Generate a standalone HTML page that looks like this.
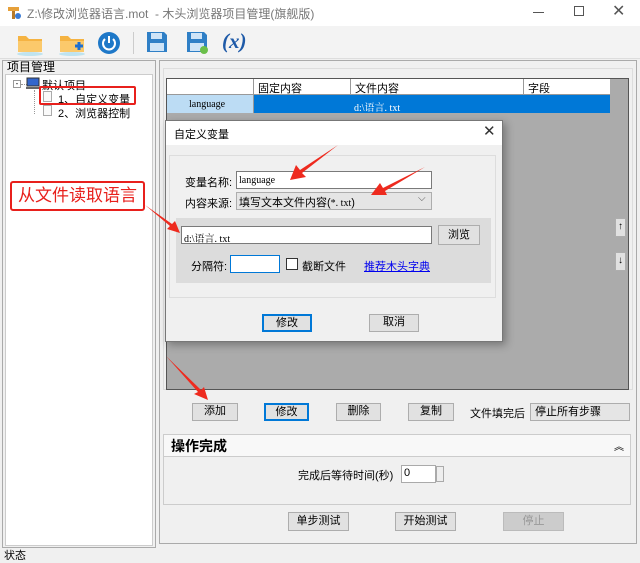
<!DOCTYPE html>
<html><head><meta charset="utf-8"><style>
*{box-sizing:border-box;margin:0;padding:0}
body{width:640px;height:560px;background:#f0f0f0;font-family:"Liberation Sans","Noto Sans CJK SC",sans-serif;font-size:11px;color:#000;position:relative;overflow:hidden}
.a{position:absolute}
.btn{position:absolute;background:#e1e1e1;border:1px solid #adadad;text-align:center;line-height:15px;font-size:11px}
.mono{font-family:"Liberation Serif","Noto Serif CJK SC",serif;font-size:10px}
</style></head><body>
<div class="a" style="left:0;top:0;width:640px;height:26px;background:#fff"></div>
<svg class="a" style="left:6px;top:4px" width="16" height="16"><rect x="2" y="3" width="11" height="4" fill="#e6a03a"/><rect x="6" y="7" width="3" height="8" fill="#b77a2a"/><circle cx="12" cy="12" r="3" fill="#3a7bd5"/></svg>
<div class="a" style="left:27px;top:5px;color:#777;font-size:12px">Z:\修改浏览器语言.mot &nbsp;- 木头浏览器项目管理(旗舰版)</div>
<div class="a" style="left:533px;top:12px;width:11px;height:1px;background:#555"></div>
<div class="a" style="left:574px;top:6px;width:10px;height:10px;border:1px solid #555"></div>
<div class="a" style="left:612px;top:1px;font-size:16px;color:#555">✕</div>
<div class="a" style="left:0;top:26px;width:640px;height:33px;background:#f3f3f3;border-bottom:1px solid #ddd"></div>
<svg class="a" style="left:16px;top:30px" width="28" height="26"><path d="M2 6h8l3 3h13v13H2z" fill="#f5b342"/><path d="M2 11h24v11H2z" fill="#fbc96b"/><ellipse cx="14" cy="24" rx="13" ry="2" fill="#bfe3ef"/></svg>
<svg class="a" style="left:58px;top:30px" width="28" height="26"><path d="M2 6h8l3 3h13v13H2z" fill="#f5b342"/><path d="M2 11h24v11H2z" fill="#fbc96b"/><path d="M17 16h8M21 12v8" stroke="#1e6fd0" stroke-width="3"/><ellipse cx="14" cy="24" rx="13" ry="2" fill="#bfe3ef"/></svg>
<svg class="a" style="left:96px;top:30px" width="26" height="26"><circle cx="13" cy="13" r="11" fill="#1e78c8"/><path d="M9 9a6 6 0 1 0 8 0" stroke="#fff" stroke-width="2" fill="none"/><path d="M13 6v7" stroke="#fff" stroke-width="2"/></svg>
<div class="a" style="left:133px;top:32px;width:1px;height:22px;background:#ccc"></div>
<svg class="a" style="left:146px;top:31px" width="22" height="22"><path d="M1 1h17l3 3v17H1z" fill="#2f7fc6"/><rect x="5" y="2" width="11" height="6" fill="#cfe4f7"/><rect x="4" y="12" width="14" height="8" fill="#cfe4f7"/></svg>
<svg class="a" style="left:186px;top:31px" width="24" height="24"><path d="M1 1h17l3 3v17H1z" fill="#2f7fc6"/><rect x="5" y="2" width="11" height="6" fill="#cfe4f7"/><rect x="4" y="12" width="14" height="8" fill="#cfe4f7"/><circle cx="18" cy="19" r="4" fill="#6bbf4a"/></svg>
<div class="a" style="left:222px;top:29px;font-family:'Liberation Serif',serif;font-weight:bold;font-style:italic;font-size:21px;color:#1e5aa8">(x)</div>
<div class="a" style="left:2px;top:60px;width:154px;height:488px;border:1px solid #aaa;background:#f0f0f0"></div>
<div class="a" style="left:7px;top:58px;font-size:12px">项目管理</div>
<div class="a" style="left:5px;top:74px;width:148px;height:472px;background:#fff;border:1px solid #ccc"></div>
<div class="a" style="left:13px;top:80px;width:8px;height:8px;border:1px solid #999;font-size:8px;line-height:5px;text-align:center">-</div>
<div class="a" style="left:21px;top:84px;width:6px;border-top:1px dotted #999"></div>
<svg class="a" style="left:26px;top:77px" width="14" height="13"><rect x="1" y="1" width="12" height="8" fill="#3366cc" stroke="#333"/><rect x="0" y="10" width="14" height="2" fill="#666"/></svg>
<div class="a" style="left:42px;top:77px">默认项目</div>
<div class="a" style="left:34px;top:90px;height:24px;border-left:1px dotted #999"></div>
<div class="a" style="left:43px;top:91px;width:9px;height:11px;border:1px solid #aaa;background:#fafafa"></div>
<div class="a" style="left:58px;top:91px">1、自定义变量</div>
<div class="a" style="left:43px;top:105px;width:9px;height:11px;border:1px solid #aaa;background:#fafafa"></div>
<div class="a" style="left:58px;top:105px">2、浏览器控制</div>
<div class="a" style="left:39px;top:86px;width:97px;height:19px;border:2px solid #e8201c;border-radius:2px"></div>
<div class="a" style="left:159px;top:60px;width:478px;height:484px;border:1px solid #aaa;background:#f0f0f0"></div>
<div class="a" style="left:163px;top:68px;width:470px;height:322px;border:1px solid #ddd"></div>
<div class="a" style="left:166px;top:78px;width:463px;height:312px;background:#ababab;border:1px solid #555"></div>
<div class="a" style="left:167px;top:79px;width:443px;height:16px;background:#fff;border-bottom:1px solid #999"></div>
<div class="a" style="left:253px;top:79px;width:1px;height:34px;background:#999"></div>
<div class="a" style="left:350px;top:79px;width:1px;height:34px;background:#999"></div>
<div class="a" style="left:523px;top:79px;width:1px;height:34px;background:#999"></div>
<div class="a" style="left:258px;top:80px">固定内容</div>
<div class="a" style="left:355px;top:80px">文件内容</div>
<div class="a" style="left:528px;top:80px">字段</div>
<div class="a" style="left:167px;top:95px;width:86px;height:18px;background:#bcdcf4"></div>
<div class="a mono" style="left:189px;top:99px">language</div>
<div class="a" style="left:254px;top:95px;width:356px;height:18px;background:#0078d7"></div>
<div class="a mono" style="left:354px;top:99px;color:#fff">d:\语言. txt</div>
<div class="btn" style="left:615px;top:218px;width:11px;height:19px;font-size:10px">↑</div>
<div class="btn" style="left:615px;top:252px;width:11px;height:19px;font-size:10px">↓</div>
<div class="a" style="left:165px;top:120px;width:338px;height:222px;background:#f0f0f0;border:1px solid #777;box-shadow:3px 3px 8px rgba(0,0,0,.3)"></div>
<div class="a" style="left:166px;top:121px;width:336px;height:24px;background:#fff"></div>
<div class="a" style="left:174px;top:126px">自定义变量</div>
<div class="a" style="left:483px;top:122px;font-size:15px;color:#333">✕</div>
<div class="a" style="left:169px;top:155px;width:327px;height:143px;border:1px solid #ddd"></div>
<div class="a" style="left:185px;top:174px">变量名称:</div>
<div class="a" style="left:236px;top:171px;width:196px;height:18px;background:#fff;border:1px solid #7a7a7a"></div>
<div class="a mono" style="left:239px;top:175px">language</div>
<div class="a" style="left:185px;top:195px">内容来源:</div>
<div class="a" style="left:236px;top:192px;width:196px;height:18px;background:#e5e5e5;border:1px solid #adadad"></div>
<div class="a" style="left:239px;top:194px">填写文本文件内容(<span class="mono">*. txt</span>)</div>
<div class="a" style="left:418px;top:193px;font-size:10px;color:#555">⌵</div>
<div class="a" style="left:176px;top:218px;width:315px;height:65px;background:#dcdcdc"></div>
<div class="a" style="left:181px;top:226px;width:251px;height:18px;background:#fff;border:1px solid #7a7a7a"></div>
<div class="a mono" style="left:184px;top:230px">d:\语言. txt</div>
<div class="btn" style="left:438px;top:225px;width:42px;height:20px;line-height:18px">浏览</div>
<div class="a" style="left:191px;top:258px">分隔符:</div>
<div class="a" style="left:230px;top:255px;width:50px;height:18px;background:#fff;border:1px solid #0078d7"></div>
<div class="a" style="left:286px;top:258px;width:12px;height:12px;background:#fff;border:1px solid #333"></div>
<div class="a" style="left:302px;top:258px">截断文件</div>
<div class="a" style="left:364px;top:258px;color:#0000ee;text-decoration:underline">推荐木头字典</div>
<div class="btn" style="left:262px;top:314px;width:50px;height:18px;border:2px solid #0078d7;line-height:14px">修改</div>
<div class="btn" style="left:369px;top:314px;width:50px;height:18px">取消</div>
<div class="a" style="left:10px;top:181px;width:135px;height:30px;border:2px solid #e8201c;border-radius:3px;background:#fff;color:#e8201c;font-size:17px;line-height:26px;text-align:center">从文件读取语言</div>
<svg class="a" style="left:0;top:0" width="640" height="560">
<g fill="#ee2a1e">
<path d="M338 145 L300 170 L296 165 L290 180 L306 177 L302 173 Z"/>
<path d="M425 167 L383 188 L380 183 L371 195 L387 195 L385 191 Z"/>
<path d="M145 205 L170 226 L167 229 L180 233 L175 221 L172 224 Z"/>
<path d="M166 356 L198 392 L194 394 L208 400 L204 387 L201 390 Z"/>
</g></svg>
<div class="btn" style="left:192px;top:403px;width:46px;height:18px">添加</div>
<div class="btn" style="left:264px;top:403px;width:45px;height:18px;border:2px solid #0078d7;line-height:14px">修改</div>
<div class="btn" style="left:336px;top:403px;width:45px;height:18px">删除</div>
<div class="btn" style="left:408px;top:403px;width:46px;height:18px">复制</div>
<div class="a" style="left:470px;top:405px">文件填完后</div>
<div class="a" style="left:530px;top:403px;width:100px;height:18px;background:#e5e5e5;border:1px solid #adadad;padding-left:4px;line-height:16px">停止所有步骤</div>
<div class="a" style="left:163px;top:434px;width:468px;height:71px;border:1px solid #ccc;background:#f0f0f0"></div>
<div class="a" style="left:164px;top:435px;width:466px;height:22px;background:#f8f8f8;border-bottom:1px solid #ccc"></div>
<div class="a" style="left:171px;top:436px;font-size:14px;font-weight:bold">操作完成</div>
<div class="a" style="left:614px;top:438px;font-size:10px">︽</div>
<div class="a" style="left:298px;top:467px">完成后等待时间(秒)</div>
<div class="a" style="left:401px;top:465px;width:35px;height:18px;background:#fff;border:1px solid #aaa;padding-left:2px;line-height:15px">0</div>
<div class="a" style="left:436px;top:466px;width:8px;height:16px;border:1px solid #aaa;background:#eee"></div>
<div class="btn" style="left:288px;top:512px;width:61px;height:19px;line-height:17px">单步测试</div>
<div class="btn" style="left:395px;top:512px;width:61px;height:19px;line-height:17px">开始测试</div>
<div class="btn" style="left:503px;top:512px;width:61px;height:19px;line-height:17px;background:#ccc;border-color:#bbb;color:#999">停止</div>
<div class="a" style="left:4px;top:547px">状态</div>
</body></html>
